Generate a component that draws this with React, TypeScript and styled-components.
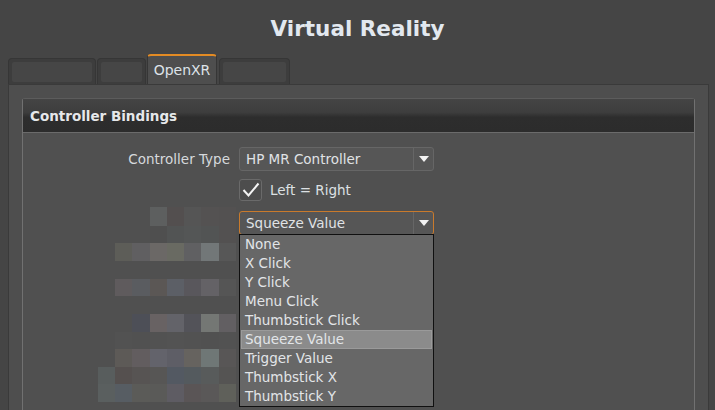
import React from 'react';
import styled, { createGlobalStyle } from 'styled-components';

const GlobalStyle = createGlobalStyle`
  html, body {
    margin: 0;
    height: 410px;
    overflow: hidden;
    background: #454545;
  }
  #root {
    height: 100%;
  }
`;

const Page = styled.div`
  display: flex;
  flex-direction: column;
  height: 410px;
  font-family: 'DejaVu Sans', Verdana, sans-serif;
  font-size: 13.5px;
  color: #d8dbde;
`;

const Title = styled.h1`
  margin: 0;
  height: 54px;
  box-sizing: border-box;
  padding-top: 3px;
  display: flex;
  align-items: center;
  justify-content: center;
  font-size: 21.5px;
  font-weight: bold;
  color: #e2e8ef;
`;

const TabBar = styled.div`
  display: flex;
  align-items: flex-end;
  height: 30px;
  padding-left: 8px;
`;

const Tab = styled.div<{ w: number; active?: boolean }>`
  box-sizing: border-box;
  width: ${(p) => p.w}px;
  height: ${(p) => (p.active ? 30 : 26)}px;
  margin-right: ${(p) => (p.active ? 2 : 1)}px;
  border: 1px solid #363636;
  border-bottom: none;
  border-radius: 4px 4px 0 0;
  background: ${(p) => (p.active ? '#4e4e4e' : '#3d3d3d')};
  border-top: ${(p) => (p.active ? '2px solid #e38b24' : '1px solid #363636')};
  padding: ${(p) => (p.active ? '0' : '3px 3px 2px 3px')};
  display: flex;
  align-items: center;
  justify-content: center;
  font-size: 14px;
  color: #dde2e8;
`;

const TabInner = styled.div`
  flex: 1;
  align-self: stretch;
  background: #464646;
  border-radius: 2px;
`;

const Panel = styled.div`
  flex: 1;
  margin: 0 6px 0 8px;
  background: #4e4e4e;
  border: 1px solid #3a3a3a;
  border-bottom: none;
  padding: 13px 13px 0 13px;
  display: flex;
  flex-direction: column;
`;

const GroupBox = styled.div`
  flex: 1;
  display: flex;
  flex-direction: column;
  background: #505050;
  border: 1px solid #717171;
  border-top-color: #5c5c5c;
  border-bottom: none;
  border-radius: 3px 3px 0 0;
`;

const GroupHeader = styled.div`
  height: 33px;
  display: flex;
  align-items: center;
  padding-left: 7px;
  background: linear-gradient(#444444 0%, #3e3e3e 40%, #2d2d2d 55%, #2c2c2c 100%);
  border-bottom: 1px solid #6b6b6b;
  font-weight: bold;
  font-size: 13.5px;
  color: #e6e8ea;
`;

const FormGrid = styled.div`
  display: grid;
  grid-template-columns: 210px 195px;
  column-gap: 6px;
  align-items: center;
  padding-top: 14px;
`;

const Label = styled.div`
  text-align: right;
  padding-right: 3px;
  color: #d6d9dc;
`;

const SelectBox = styled.div<{ focused?: boolean }>`
  position: relative;
  box-sizing: border-box;
  height: 24px;
  display: flex;
  align-items: center;
  border: 1px solid ${(p) => (p.focused ? '#c97a2c' : '#666666')};
  border-radius: 3px;
  background: #565656;
  color: #e0e3e6;
`;

const SelectText = styled.div`
  flex: 1;
  padding-left: 6px;
`;

const ArrowCell = styled.div`
  width: 19px;
  align-self: stretch;
  border-left: 1px solid #666666;
  display: flex;
  align-items: center;
  justify-content: center;
`;

const CheckRow = styled.div`
  grid-column: 2;
  display: flex;
  align-items: center;
  gap: 8px;
  margin-top: 8px;
  color: #dde0e3;
`;

const CheckBox = styled.div`
  box-sizing: border-box;
  width: 23px;
  height: 22px;
  border: 1px solid #6a6a6a;
  border-radius: 3px;
  background: #4d4d4d;
  display: flex;
  align-items: center;
  justify-content: center;
`;

const Mosaic = styled.div`
  align-self: start;
  margin-top: 6px;
  display: flex;
  flex-direction: column;
  align-items: flex-end;
  margin-right: -3px;
`;

const MosaicRow = styled.div<{ h: number }>`
  display: flex;
  height: ${(p) => p.h}px;
`;

const MosaicCell = styled.div<{ c: string }>`
  width: 17.3px;
  background: ${(p) => p.c};
`;

const SelectSlot = styled.div`
  align-self: start;
  margin-top: 10px;
`;

const DropList = styled.ul`
  position: absolute;
  top: 22px;
  left: -1px;
  width: 195px;
  box-sizing: border-box;
  margin: 0;
  padding: 0 1px;
  list-style: none;
  background: #676767;
  border: 1px solid #101010;
  z-index: 5;
`;

const DropItem = styled.li<{ selected?: boolean }>`
  box-sizing: border-box;
  height: 19px;
  line-height: 17px;
  padding-left: 3px;
  color: #e2e5e8;
  background: ${(p) => (p.selected ? '#8b8b8b' : 'transparent')};
  border: 1px solid ${(p) => (p.selected ? '#9a9a9a' : 'transparent')};
`;

const Arrow = () => (
  <svg width="10" height="6" viewBox="0 0 10 6">
    <path d="M0 0 L10 0 L5 6 Z" fill="#f2f2f2" />
  </svg>
);

const mosaic: { h: number; cells: string[] }[] = [
  { h: 19, cells: ['#5d5f5f', '#534f4f', '#555555', '#545252', '#535151'] },
  { h: 17, cells: ['#4f4f4f', '#525454', '#545656', '#525454', '#535151'] },
  { h: 18, cells: ['#5d5d58', '#605f61', '#6b6866', '#696a62', '#606062', '#727778', '#575757'] },
  { h: 18, cells: [] },
  { h: 17, cells: ['#5f5b5d', '#5a5c60', '#5b5755', '#5c5f66', '#59575c', '#646266', '#555555'] },
  { h: 18, cells: [] },
  { h: 18, cells: ['#4d4f57', '#686263', '#636369', '#535359', '#747774', '#625f62'] },
  { h: 17, cells: ['#525252', '#515151', '#525252', '#535353', '#525252', '#515151', '#525252'] },
  { h: 18, cells: ['#5d5a57', '#625d5f', '#63636b', '#5e5e66', '#66635f', '#6f7776', '#585656'] },
  { h: 17, cells: ['#585d5d', '#55504f', '#575453', '#575655', '#535962', '#545a5e', '#585b5b', '#555453'] },
  { h: 18, cells: ['#5a5f5f', '#575d63', '#5b5b58', '#5a5a58', '#5e5c63', '#5a5556', '#5a5858', '#5f605a'] },
];

const options = [
  'None',
  'X Click',
  'Y Click',
  'Menu Click',
  'Thumbstick Click',
  'Squeeze Value',
  'Trigger Value',
  'Thumbstick X',
  'Thumbstick Y',
];

export default function App() {
  return (
    <Page>
      <GlobalStyle />
      <Title>Virtual Reality</Title>
      <TabBar>
        <Tab w={88}><TabInner /></Tab>
        <Tab w={49}><TabInner /></Tab>
        <Tab w={70} active>OpenXR</Tab>
        <Tab w={71}><TabInner /></Tab>
      </TabBar>
      <Panel>
        <GroupBox>
          <GroupHeader>Controller Bindings</GroupHeader>
          <FormGrid>
            <Label>Controller Type</Label>
            <SelectBox>
              <SelectText>HP MR Controller</SelectText>
              <ArrowCell><Arrow /></ArrowCell>
            </SelectBox>

            <CheckRow>
              <CheckBox>
                <svg width="18" height="16" viewBox="0 0 18 16">
                  <path d="M1.5 8 L6.5 13.5 L16.5 1.5" fill="none" stroke="#f4f4f4" strokeWidth="2" />
                </svg>
              </CheckBox>
              Left = Right
            </CheckRow>

            <Mosaic>
              {mosaic.map((row, i) => (
                <MosaicRow key={i} h={row.h}>
                  {row.cells.map((c, j) => (
                    <MosaicCell key={j} c={c} />
                  ))}
                </MosaicRow>
              ))}
            </Mosaic>
            <SelectSlot>
              <SelectBox focused>
                <SelectText>Squeeze Value</SelectText>
                <ArrowCell><Arrow /></ArrowCell>
                <DropList>
                  {options.map((o) => (
                    <DropItem key={o} selected={o === 'Squeeze Value'}>{o}</DropItem>
                  ))}
                </DropList>
              </SelectBox>
            </SelectSlot>
          </FormGrid>
        </GroupBox>
      </Panel>
    </Page>
  );
}
